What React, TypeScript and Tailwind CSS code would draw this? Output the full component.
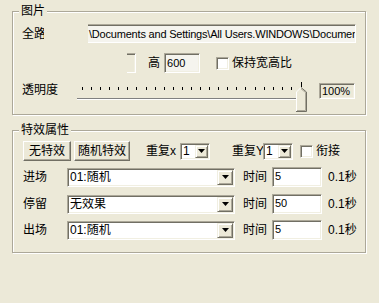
import React from 'react';

const sunken =
  'border border-t-[#aca899] border-l-[#aca899] border-b-white border-r-white shadow-[inset_1px_1px_0_#716f64,inset_-1px_-1px_0_#f1efe2]';
const raised =
  'border border-t-white border-l-white border-b-[#716f64] border-r-[#716f64] shadow-[inset_-1px_-1px_0_#aca899]';

const Arrow: React.FC<{ small?: boolean }> = ({ small }) => (
  <div
    className={`flex items-center justify-center bg-[#ece9d8] border border-t-[#f1efe2] border-l-[#f1efe2] border-b-[#716f64] border-r-[#716f64] shadow-[inset_1px_1px_0_#fff,inset_-1px_-1px_0_#aca899] ${
      small ? 'w-[13px] h-[13px]' : 'w-[16px] h-[15px]'
    }`}
  >
    <svg width="7" height="4" viewBox="0 0 7 4">
      <polygon points="0,0 7,0 3.5,4" fill="#000" />
    </svg>
  </div>
);

const Combo: React.FC<{ value: string; w: string; small?: boolean }> = ({ value, w, small }) => (
  <div className={`flex shrink-0 items-center p-[1px] bg-white ${sunken} ${w} ${small ? 'h-[17px]' : 'h-[19px]'}`}>
    <span className="flex-1 pl-[1px] whitespace-nowrap overflow-hidden leading-[13px]">{value}</span>
    <Arrow small={small} />
  </div>
);

const Edit: React.FC<{ value: string; w: string; h: string; bg?: string }> = ({ value, w, h, bg }) => (
  <div className={`flex items-center pl-[2px] text-[11px] ${sunken} ${w} ${h} ${bg ?? 'bg-white'}`}>
    {value}
  </div>
);

const Check: React.FC = () => <div className={`w-[13px] h-[13px] bg-white ${sunken}`} />;

const Btn: React.FC<{ label: string; w: string }> = ({ label, w }) => (
  <button className={`h-[20px] ${w} bg-[#ece9d8] ${raised} flex items-center justify-center leading-[14px] whitespace-nowrap`}>
    {label}
  </button>
);

const Group: React.FC<{ title: string; cls: string; children: React.ReactNode }> = ({ title, cls, children }) => (
  <div className={`relative w-[354px] border border-[#aca899] shadow-[inset_1px_1px_0_#fff,1px_1px_0_#fff] ${cls}`}>
    <span className="absolute -top-[8px] left-[6px] px-[2px] bg-[#ece9d8] leading-[14px]">{title}</span>
    {children}
  </div>
);

const Slider: React.FC = () => {
  const ticks = Array.from({ length: 24 }, (_, i) => Math.round(8 + i * 9.08));
  return (
    <svg width="236" height="30" viewBox="0 0 236 30">
      {ticks.map((x) => (
        <rect key={x} x={x} y={5} width={1} height={3} fill="#000" />
      ))}
      <rect x={227} y={0} width={1} height={5} fill="#000" />
      <rect x={3} y={16} width={228} height={1} fill="#808080" />
      <rect x={3} y={17} width={228} height={1} fill="#fff" />
      <polygon points="222,10 227,5 232,10 232,29 222,29" fill="#ece9d8" />
      <polyline points="222.5,29 222.5,10 227,5.5" fill="none" stroke="#fff" strokeWidth="1" />
      <polyline points="227,5.5 232.5,10 232.5,29.5 222,29.5" fill="none" stroke="#716f64" strokeWidth="1" />
      <polyline points="227,6.8 231.5,10.5 231.5,28.5 223,28.5" fill="none" stroke="#aca899" strokeWidth="1" />
    </svg>
  );
};

export default function App() {
  return (
    <div className="w-[379px] h-[303px] bg-[#ece9d8] overflow-hidden pt-[11px] pl-[12px] text-[12px] leading-[14px] text-black font-['Liberation_Sans','Noto_Sans_CJK_SC',sans-serif]">
      <Group title="图片" cls="h-[104px]">
        <div className="flex flex-col pt-[12px] pl-[9px]">
          <div className="flex items-center h-[19px]">
            <span className="w-[22px] overflow-hidden whitespace-nowrap">全路</span>
            <div className="ml-[44px] w-[268px] h-[19px] flex items-center bg-[#f5f4ee] border-t border-t-[#aca899] border-b border-b-white border-r border-r-white shadow-[inset_0_1px_0_#716f64] text-[11px] tracking-[-0.2px] whitespace-nowrap overflow-hidden pl-[1px]">
              \Documents and Settings\All Users.WINDOWS\Documents\My Pictures
            </div>
          </div>
          <div className="flex items-center h-[20px] mt-[10px]">
            <div className="ml-[105px] w-[9px] h-[20px] border-t border-t-[#aca899] border-r border-r-white border-b border-b-white shadow-[inset_0_1px_0_#716f64,inset_-1px_0_0_#f1efe2]" />
            <span className="ml-[12px]">高</span>
            <div className="ml-[4px]">
              <Edit value="600" w="w-[36px]" h="h-[20px]" bg="bg-[#f5f4ee]" />
            </div>
            <div className="ml-[16px]">
              <Check />
            </div>
            <span className="ml-[3px] whitespace-nowrap">保持宽高比</span>
          </div>
          <div className="flex items-start h-[30px] mt-[9px]">
            <span className="w-[52px] mt-[1px]">透明度</span>
            <Slider />
            <div className="ml-[9px] mt-[1px]">
              <Edit value="100%" w="w-[36px]" h="h-[16px]" bg="bg-[#ece9d8]" />
            </div>
          </div>
        </div>
      </Group>

      <Group title="特效属性" cls="h-[123px] mt-[15px]">
        <div className="flex flex-col pt-[10px] pl-[10px]">
          <div className="flex items-center h-[20px]">
            <Btn label="无特效" w="w-[48px]" />
            <div className="ml-[3px]">
              <Btn label="随机特效" w="w-[56px]" />
            </div>
            <span className="ml-[16px] w-[34px] shrink-0 whitespace-nowrap">重复x</span>
            <Combo value="1" w="w-[30px]" small />
            <span className="ml-[22px] w-[31px] shrink-0 whitespace-nowrap">重复Y</span>
            <Combo value="1" w="w-[30px]" small />
            <div className="ml-[7px]">
              <Check />
            </div>
            <span className="ml-[3px] whitespace-nowrap">衔接</span>
          </div>
          {[
            { label: '进场', value: '01:随机', time: '5', mt: 'mt-[6px]' },
            { label: '停留', value: '无效果', time: '50', mt: 'mt-[7px]' },
            { label: '出场', value: '01:随机', time: '5', mt: 'mt-[6px]' },
          ].map((r) => (
            <div key={r.label} className={`flex items-center h-[20px] ${r.mt}`}>
              <span className="w-[44px] shrink-0">{r.label}</span>
              <Combo value={r.value} w="w-[168px]" />
              <span className="ml-[8px] w-[29px] shrink-0">时间</span>
              <div className={`flex items-start pl-[2px] pt-[2px] text-[11px] leading-[12px] bg-white w-[50px] h-[20px] ${sunken}`}>
                {r.time}
              </div>
              <span className="ml-[6px] whitespace-nowrap">0.1秒</span>
            </div>
          ))}
        </div>
      </Group>
    </div>
  );
}
